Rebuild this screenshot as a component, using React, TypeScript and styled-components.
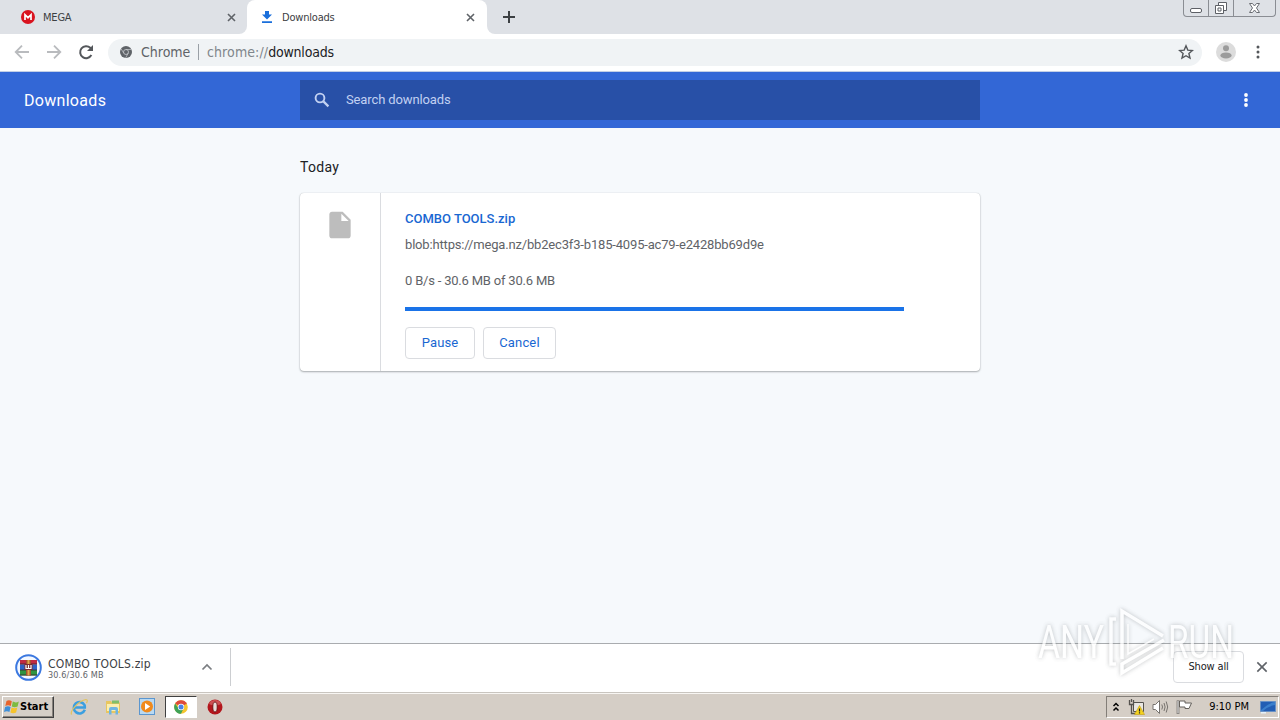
/**
 * Browser window with the downloads page, the download shelf and the taskbar
 */

import React from 'react';
import styled, { createGlobalStyle, css } from 'styled-components';

const GlobalStyle = createGlobalStyle`
  * {
    box-sizing: border-box;
  }

  body {
    margin: 0;
    overflow: hidden;
    font-family: Roboto, "Liberation Sans", sans-serif;
  }
`;

const tahoma = css`
  font-family: "DejaVu Sans Condensed", "DejaVu Sans", sans-serif;
  font-stretch: condensed;
`;

const Desktop = styled.div`
  position: relative;
  display: flex;
  flex-direction: column;
  width: 1280px;
  height: 720px;
  overflow: hidden;
  background: #f6f9fc;
`;

const Label = styled.span<{ $size: number; $spacing?: number; $color?: string; $weight?: number }>`
  font-size: ${({ $size }) => $size}px;
  letter-spacing: ${({ $spacing = 0 }) => $spacing}px;
  color: ${({ $color = 'inherit' }) => $color};
  font-weight: ${({ $weight = 400 }) => $weight};
  line-height: 16px;
  white-space: nowrap;
`;

/* Tab strip */

const TabStrip = styled.div`
  ${tahoma}
  display: flex;
  height: 34px;
  background: #fff;
  color: #3c4043;
`;

const Tab = styled.div<{ $active?: boolean }>`
  display: flex;
  align-items: center;
  width: ${({ $active }) => ($active ? 240 : 247)}px;
  height: 34px;
  padding: 0 ${({ $active }) => ($active ? '12px 0 13px' : '11px 0 21px')};
  background: ${({ $active }) => ($active ? '#fff' : '#dee1e6')};
  border-radius: ${({ $active }) => ($active ? '8px 8px 0 0' : '0 0 8px 0')};

  > span {
    flex: 1;
    margin: 1px 0 0 8px;
  }
`;

const TabSlot = styled.div`
  background: linear-gradient(#dee1e6 50%, #fff 50%);
`;

const StripRest = styled.div`
  display: flex;
  flex: 1;
  align-items: flex-start;
  justify-content: space-between;
  padding: 0 4px 0 15px;
  background: #dee1e6;
  border-bottom-left-radius: 8px;

  > svg:first-child {
    margin-top: 10px;
  }
`;

const WindowButtons = styled.div`
  display: flex;
  height: 17px;
  border: 1px solid #8a8d93;
  border-top: 0;
  border-radius: 0 0 4px 4px;
`;

const WindowButton = styled.div<{ $width: number }>`
  display: flex;
  align-items: center;
  justify-content: center;
  width: ${({ $width }) => $width}px;

  & + & {
    border-left: 1px solid #8a8d93;
  }
`;

/* Toolbar */

const Toolbar = styled.div`
  ${tahoma}
  display: flex;
  align-items: center;
  height: 38px;
  padding: 0 20px 1px 13px;
  background: #fff;
  border-bottom: 1px solid #c3cfe6;
`;

const NavButtons = styled.div`
  display: flex;
  gap: 14px;
  width: 95px;
`;

const Omnibox = styled.div`
  display: flex;
  flex: 1;
  align-items: center;
  height: 27px;
  padding: 0 8px 0 12px;
  background: #f0f3f5;
  border-radius: 14px;
`;

const Divider = styled.i`
  width: 1px;
  height: 16px;
  margin: 0 8px;
  background: #9aa0a6;
`;

const SiteName = styled.div`
  display: flex;
  width: 49px;
  margin-left: 9px;
`;

const Address = styled.div`
  display: flex;
  flex: 1;
`;

const ToolbarRight = styled.div`
  display: flex;
  align-items: center;
  gap: 20px;
  margin-left: 14px;
`;

/* Downloads page */

const PageHeader = styled.header`
  display: grid;
  grid-template-columns: 276px 680px 1fr;
  align-items: center;
  height: 56px;
  padding: 0 24px;
  background: #3367d6;
  color: #fff;

  > span {
    margin-top: 2px;
  }

  > svg {
    justify-self: end;
  }
`;

const SearchField = styled.div`
  display: flex;
  align-items: center;
  gap: 16px;
  height: 40px;
  padding-left: 14px;
  background: #2850a7;
  color: #c2d1f2;
`;

const Page = styled.main`
  display: flex;
  flex: 1;
  flex-direction: column;
  width: 680px;
  margin: 0 auto;
  padding-top: 31px;
`;

const Card = styled.section`
  display: flex;
  height: 178px;
  margin-top: 18px;
  background: #fff;
  border-radius: 4px;
  box-shadow: 0 1px 2px rgba(60, 64, 67, 0.4), 0 0 1px rgba(60, 64, 67, 0.3);
`;

const FileIconCell = styled.div`
  display: flex;
  justify-content: center;
  width: 81px;
  padding-top: 16px;
  border-right: 1px solid #dadce0;
`;

const CardBody = styled.div`
  display: flex;
  flex-direction: column;
  align-items: flex-start;
  padding: 18px 24px 0;
`;

const Url = styled(Label)`
  margin-top: 10px;
`;

const Status = styled(Label)`
  margin-top: 20px;
`;

const Progress = styled.div`
  width: 499px;
  height: 4px;
  margin: 18px 0 16px;
  background: #1a73e8;
`;

const Actions = styled.div`
  display: flex;
  gap: 8px;
`;

const Button = styled.button<{ $width: number }>`
  display: flex;
  align-items: center;
  justify-content: center;
  width: ${({ $width }) => $width}px;
  height: 32px;
  padding: 0;
  background: #fff;
  border: 1px solid #dadce0;
  border-radius: 4px;
  color: #1967d2;
  font-family: inherit;
`;

/* Download shelf */

const Shelf = styled.footer`
  ${tahoma}
  display: flex;
  align-items: center;
  height: 49px;
  padding: 0 12px 2px 15px;
  background: #fff;
  border-top: 1px solid #a9acaf;
  color: #3c4043;
`;

const ShelfItem = styled.div`
  display: flex;
  align-items: center;
  width: 216px;
  height: 38px;
  padding-right: 17px;
  border-right: 1px solid #ccced1;
`;

const ShelfText = styled.div`
  display: flex;
  flex: 1;
  flex-direction: column;
  margin: 6px 0 0 6px;

  > span {
    line-height: 11px;
  }
`;

const ShowAll = styled(Button)`
  ${tahoma}
  margin: 0 12px 0 auto;
  color: #202124;
`;

/* Taskbar */

const Taskbar = styled.div`
  ${tahoma}
  display: flex;
  align-items: center;
  height: 28px;
  padding: 2px 1px 2px 2px;
  background: #d5cec6;
  border-top: 1px solid #c9c5bf;
  box-shadow: inset 0 1px #f8f6f3;
`;

const StartButton = styled.div`
  display: flex;
  align-items: center;
  width: 52px;
  height: 22px;
  padding-left: 1px;
  border: 1px solid;
  border-color: #fff #404040 #404040 #fff;
  box-shadow: inset -1px -1px #87827c;
`;

const QuickLaunch = styled.div`
  display: flex;
  align-items: center;
  gap: 2px;
  margin-left: 9px;
`;

const LaunchItem = styled.div<{ $pressed?: boolean }>`
  display: flex;
  align-items: center;
  justify-content: center;
  width: 32px;
  height: 22px;
  background: ${({ $pressed }) => ($pressed ? '#fff' : 'none')};
  border: ${({ $pressed }) => ($pressed ? '1px solid #fff' : '1px solid transparent')};
  border-top-color: ${({ $pressed }) => ($pressed ? '#404040' : 'transparent')};
  border-left-color: ${({ $pressed }) => ($pressed ? '#404040' : 'transparent')};
`;

const Tray = styled.div`
  display: flex;
  align-items: center;
  width: 173px;
  height: 22px;
  margin-left: auto;
  padding: 0 2px 0 5px;
  border: 1px solid;
  border-color: #837e78 #fff #fff #837e78;

  > span {
    margin: 0 11px 0 auto;
  }
`;

const TrayIcons = styled.div`
  display: flex;
  align-items: center;
  gap: 7px;
`;

const Watermark = styled.svg`
  position: absolute;
  left: 1030px;
  top: 604px;
  filter: drop-shadow(0 0 2px rgba(90, 95, 100, 0.5));
  opacity: 0.75;
  pointer-events: none;
`;

const CloseIcon = ({ size = 9, weight = 1.6 }: { size?: number; weight?: number }) => (
  <svg width={size} height={size} viewBox="0 0 9 9">
    <path d="M1 1l7 7M8 1L1 8" stroke="#5f6368" strokeWidth={weight} />
  </svg>
);

const DotsIcon = ({ color }: { color: string }) => (
  <svg width="4" height="14" viewBox="0 0 4 14" fill={color}>
    <circle cx="2" cy="2" r="1.5" />
    <circle cx="2" cy="7" r="1.5" />
    <circle cx="2" cy="12" r="1.5" />
  </svg>
);

const MegaIcon = () => (
  <svg width="14" height="14" viewBox="0 0 14 14">
    <circle cx="7" cy="7" r="7" fill="#d9131f" />
    <path d="M4 10V4.700l3 3 3-3V10" fill="none" stroke="#fff" strokeWidth="1.700" />
  </svg>
);

const DownloadIcon = () => (
  <svg width="14" height="14" viewBox="0 0 14 14" fill="#1a6fdb">
    <path d="M5 1h4v3.500h3L7 9.500 2 4.500h3zM2 11.300h10V13H2z" />
  </svg>
);

const ArrowIcon = ({ flip }: { flip?: boolean }) => (
  <svg width="18" height="18" viewBox="0 0 18 18">
    <path
      d="M16 9H3M9 2.700L2.700 9 9 15.300"
      fill="none"
      stroke="#b9bbbe"
      strokeWidth="1.800"
      transform={flip ? 'matrix(-1 0 0 1 18 0)' : undefined}
    />
  </svg>
);

const ReloadIcon = () => (
  <svg width="18" height="18" viewBox="0 0 18 18">
    <path d="M14.400 12.100A6 6 0 1 1 13.300 4.800L15 6.500" fill="none" stroke="#54575b" strokeWidth="2" />
    <path d="M16 2v6h-6z" fill="#54575b" />
  </svg>
);

const SiteIcon = () => (
  <svg width="12" height="12" viewBox="0 0 12 12">
    <circle cx="6" cy="6" r="6" fill="#5f6368" />
    <circle cx="6" cy="6" r="2.500" fill="#5f6368" stroke="#c9ccd0" strokeWidth="0.800" />
    <path d="M6 3.500h5.300M3.800 7.200L1.200 3M8.200 7.200l-2.500 4.600" stroke="#c9ccd0" strokeWidth="0.700" />
  </svg>
);

const StarIcon = () => (
  <svg width="16" height="16" viewBox="0 0 16 16">
    <path
      d="M8 1.800l1.800 4.300 4.600.4-3.500 3 1.100 4.600L8 11.700l-4 2.400 1.100-4.600-3.500-3 4.600-.4z"
      fill="none"
      stroke="#54575b"
      strokeWidth="1.400"
    />
  </svg>
);

const AvatarIcon = () => (
  <svg width="20" height="20" viewBox="0 0 20 20">
    <circle cx="10" cy="10" r="10" fill="#dcdcdc" />
    <circle cx="10" cy="6.200" r="3" fill="#9b9b9b" />
    <ellipse cx="10" cy="13.400" rx="5.600" ry="3" fill="#9b9b9b" />
  </svg>
);

const SearchIcon = () => (
  <svg width="16" height="16" viewBox="0 0 16 16" fill="none" stroke="#c2d1f2">
    <circle cx="6" cy="6" r="4.400" strokeWidth="1.900" />
    <path d="M9.400 9.400l5 5" strokeWidth="2.200" />
  </svg>
);

const FileIcon = () => (
  <svg width="32" height="32" viewBox="0 0 24 24">
    <path
      d="M6 2c-1.100 0-1.990.9-1.990 2L4 20c0 1.100.89 2 1.990 2H18c1.100 0 2-.9 2-2V8l-6-6H6zm7 7V3.500L18.500 9H13z"
      fill="#bdbdbd"
    />
  </svg>
);

const ArchiveIcon = () => (
  <svg width="27" height="27" viewBox="0 0 27 27">
    <circle cx="13.500" cy="13.500" r="12.300" fill="#f4f8ff" stroke="#3b78e0" strokeWidth="2" />
    <path d="M5 6h17v4.500H5z" fill="#c02a44" />
    <path d="M5 10.500h17V16H5z" fill="#2f62c8" />
    <path d="M5 16h17v5.500H5z" fill="#2f9440" />
    <path d="M5 10h17M5 16h17M5 21h17" stroke="#3a2230" strokeWidth="0.800" />
    <path d="M11 6h5v15.500h-5z" fill="#a5502e" />
    <path d="M12.500 6h2v15.500h-2z" fill="#e0a94a" />
    <path d="M9.500 10h8v6h-8z" fill="#7c2a30" />
    <path d="M11 11v3.500h5V11M13.500 11v3.500" fill="none" stroke="#fff" strokeWidth="1.200" />
  </svg>
);

const ChevronIcon = () => (
  <svg width="12" height="8" viewBox="0 0 12 8">
    <path d="M1.500 6.500L6 2l4.500 4.500" fill="none" stroke="#7a7d81" strokeWidth="1.700" />
  </svg>
);

const WindowsIcon = () => (
  <svg width="16" height="16" viewBox="0 0 16 16">
    <path d="M2.500 2Q5 .5 7.800 2.200L6.800 7Q4 5.500 1.300 7z" fill="#e8642c" />
    <path d="M8.800 2.600q3 1.600 6-.1L13.600 7.500q-3 1.500-5.800 0z" fill="#7dbb42" />
    <path d="M1.100 8Q4 6.600 6.600 8l-1.200 5Q3 11.500 0 13z" fill="#3f8fd8" />
    <path d="M7.600 8.500q3 1.500 5.700 0l-1.200 5q-3 1.500-5.700 0z" fill="#f6c32c" />
  </svg>
);

const ExplorerIcon = () => (
  <svg width="18" height="18" viewBox="0 0 18 18" fill="none">
    <path d="M14.800 11.800A5.700 5.700 0 1 1 14.500 7q.4 1.200.3 2.500H5" stroke="#3b9fe0" strokeWidth="2.600" />
    <path d="M1.600 16.500C-.5 13 9 2.500 16 1.500c1.800 0 1.500 2 .4 3.600" stroke="#e2c35d" strokeWidth="1.200" />
  </svg>
);

const FolderIcon = () => (
  <svg width="18" height="18" viewBox="0 0 18 18">
    <path d="M2 3h5l1 1.500h8V15H2z" fill="#e8c65f" />
    <path d="M3 6h12v7H3z" fill="#fbeeb0" />
    <path d="M8 2.500h7v3H8z" fill="#7fbf6b" />
    <path d="M5 16.500V11q0-2 2-2h5q2 0 2 2v5.500h-2.500V12h-4v4.500z" fill="#6fb5e2" />
  </svg>
);

const PlayerIcon = () => (
  <svg width="17" height="17" viewBox="0 0 17 17">
    <rect x="0.500" y="0.500" width="15" height="16" fill="#b9d9f2" stroke="#5b96cf" />
    <circle cx="8" cy="8.500" r="6" fill="#f08a1c" />
    <path d="M6 5l5.200 3.500L6 12z" fill="#fff" />
  </svg>
);

const ChromeIcon = () => (
  <svg width="14" height="14" viewBox="0 0 14 14">
    <circle cx="7" cy="7" r="6.800" fill="#f5c52f" />
    <path d="M7 7L1.100 3.600A6.800 6.800 0 0 1 12.900 3.600z" fill="#de4a3c" />
    <path d="M7 7H3.500L1.100 3.600A6.800 6.800 0 0 0 7 13.800L9.500 8.500z" fill="#3fa257" />
    <circle cx="7" cy="7" r="3.200" fill="#fff" />
    <circle cx="7" cy="7" r="2.500" fill="#4a82e6" />
  </svg>
);

const OperaIcon = () => (
  <svg width="16" height="16" viewBox="0 0 16 16">
    <circle cx="8" cy="8" r="7.500" fill="#b3161c" />
    <path d="M2 5a6.500 6.500 0 0 1 12 0q-6 3-12 0z" fill="#d9696b" opacity="0.700" />
    <ellipse cx="8" cy="8" rx="2.200" ry="5" fill="#e9dcd8" stroke="#5e0a0d" strokeWidth="0.800" />
  </svg>
);

const NetworkIcon = () => (
  <svg width="17" height="16" viewBox="0 0 17 16">
    <path d="M5.500 3.500h10v9h-10z" fill="#e9e7e2" stroke="#55524e" />
    <path d="M1.500 1v4.500h4V1M3.500 0v3M3.500 5v9.500h4" fill="none" stroke="#55524e" strokeWidth="1.300" />
    <path d="M11.500 6.500l5 9h-10z" fill="#f4d21f" stroke="#c29c10" strokeWidth="0.600" />
    <path d="M11.500 9.500v3M11.500 13.300v1.200" stroke="#222" strokeWidth="1.200" />
  </svg>
);

const VolumeIcon = () => (
  <svg width="17" height="16" viewBox="0 0 17 16" fill="none" stroke="#77736e">
    <path d="M1 5.500h2.500l4-4v13l-4-4H1z" fill="#fff" />
    <path d="M9.800 5.500q1.400 2.500 0 5M12 4q2.200 4 0 8M14.200 2.500q3 5.500 0 11" />
  </svg>
);

const FlagIcon = () => (
  <svg width="17" height="16" viewBox="0 0 17 16" fill="none" stroke="#65615c">
    <path d="M2 1.500v13.500" strokeWidth="2.600" />
    <path d="M2 2v12.500" stroke="#fff" strokeWidth="1" />
    <path d="M3.500 2h5.500v2h6.500l-2.500 5.500H9V8H3.500z" fill="#fff" />
  </svg>
);

const ShowDesktopIcon = () => (
  <svg width="16" height="14" viewBox="0 0 16 14">
    <path d="M0.500 1.500h15v10h-15z" fill="#235eb4" stroke="#6991c5" />
    <path d="M1 10Q8 3 15 2v3Q8 6 3 11H1z" fill="#3c80cc" />
    <path d="M1 12h5v1.500H1z" fill="#e6f1f8" />
  </svg>
);

const RunWatermark = () => (
  <Watermark width="214" height="80" viewBox="0 0 214 80">
    <g fill="#fff" fontFamily="Roboto, sans-serif" fontSize="46">
      <text x="8" y="54" textLength="66" lengthAdjust="spacingAndGlyphs">ANY</text>
      <text x="138" y="54" textLength="66" lengthAdjust="spacingAndGlyphs">RUN</text>
    </g>
    <g fill="none" stroke="#fff" strokeWidth="3.500">
      <path d="M86 15h-5v45h5" />
      <path d="M92 55V7l41 25" />
      <path d="M134 36L92 60v9l41-25" />
      <path d="M98 20v30l26-15" strokeWidth="1.500" />
    </g>
  </Watermark>
);

const App: React.FC = () => {
  return (
    <Desktop>
      <GlobalStyle />
      <TabStrip>
        <Tab>
          <MegaIcon />
          <Label $size={11} $spacing={-0.2}>MEGA</Label>
          <CloseIcon />
        </Tab>
        <TabSlot>
          <Tab $active>
            <DownloadIcon />
            <Label $size={11} $spacing={-0.2}>Downloads</Label>
            <CloseIcon />
          </Tab>
        </TabSlot>
        <StripRest>
          <svg width="13" height="13" viewBox="0 0 13 13">
            <path d="M7 1v12M1 7h12" stroke="#3c4043" strokeWidth="2" />
          </svg>
          <WindowButtons>
            <WindowButton $width={24}>
              <svg width="13" height="13" viewBox="0 0 13 13">
                <rect x="0.500" y="6.500" width="11" height="4" rx="1.500" fill="#fff" stroke="#5d6066" />
              </svg>
            </WindowButton>
            <WindowButton $width={25}>
              <svg width="13" height="13" viewBox="0 0 13 13" fill="#fff" stroke="#5d6066">
                <path d="M3.500 .5h8v8h-8z" />
                <path d="M.5 3.500h8v8h-8zM3 6h3v3H3z" />
              </svg>
            </WindowButton>
            <WindowButton $width={42}>
              <svg width="13" height="12" viewBox="0 0 13 12">
                <path
                  d="M1.500 1.500h3l2 2.500 2-2.500h3L8.500 6l3 4.500h-3l-2-2.500-2 2.500h-3L4.500 6z"
                  fill="#fff"
                  stroke="#6a6d73"
                />
              </svg>
            </WindowButton>
          </WindowButtons>
        </StripRest>
      </TabStrip>

      <Toolbar>
        <NavButtons>
          <ArrowIcon />
          <ArrowIcon flip />
          <ReloadIcon />
        </NavButtons>
        <Omnibox>
          <SiteIcon />
          <SiteName>
            <Label $size={14} $color="#5f6368">Chrome</Label>
          </SiteName>
          <Divider />
          <Address>
            <Label $size={14} $spacing={0.1} $color="#80868b">chrome://</Label>
            <Label $size={14} $spacing={-0.2} $color="#202124">downloads</Label>
          </Address>
          <StarIcon />
        </Omnibox>
        <ToolbarRight>
          <AvatarIcon />
          <DotsIcon color="#54575b" />
        </ToolbarRight>
      </Toolbar>

      <PageHeader>
        <Label $size={16} $spacing={0.3}>Downloads</Label>
        <SearchField>
          <SearchIcon />
          <Label $size={13} $spacing={-0.12}>Search downloads</Label>
        </SearchField>
        <svg width="20" height="14" viewBox="0 0 20 14" fill="#fff">
          <circle cx="10" cy="2" r="1.900" />
          <circle cx="10" cy="7" r="1.900" />
          <circle cx="10" cy="12" r="1.900" />
        </svg>
      </PageHeader>

      <Page>
        <Label $size={14} $spacing={0.3} $color="#202124">Today</Label>
        <Card>
          <FileIconCell>
            <FileIcon />
          </FileIconCell>
          <CardBody>
            <Label $size={13} $weight={500} $color="#1967d2">COMBO TOOLS.zip</Label>
            <Url $size={13} $spacing={-0.17} $color="#5f6368">
              blob:https://mega.nz/bb2ec3f3-b185-4095-ac79-e2428bb69d9e
            </Url>
            <Status $size={13} $spacing={-0.2} $color="#5f6368">0 B/s - 30.6 MB of 30.6 MB</Status>
            <Progress />
            <Actions>
              <Button $width={70}>
                <Label $size={13} $spacing={0.15}>Pause</Label>
              </Button>
              <Button $width={73}>
                <Label $size={13} $spacing={0.15}>Cancel</Label>
              </Button>
            </Actions>
          </CardBody>
        </Card>
      </Page>

      <Shelf>
        <ShelfItem>
          <ArchiveIcon />
          <ShelfText>
            <Label $size={12} $spacing={0.2}>COMBO TOOLS.zip</Label>
            <Label $size={9} $spacing={0.15} $color="#5f6368">30.6/30.6 MB</Label>
          </ShelfText>
          <ChevronIcon />
        </ShelfItem>
        <ShowAll $width={71}>
          <Label $size={11} $spacing={-0.15}>Show all</Label>
        </ShowAll>
        <CloseIcon size={12} weight={1.2} />
      </Shelf>

      <Taskbar>
        <StartButton>
          <WindowsIcon />
          <Label $size={11} $weight={700} $color="#000">Start</Label>
        </StartButton>
        <QuickLaunch>
          <LaunchItem>
            <ExplorerIcon />
          </LaunchItem>
          <LaunchItem>
            <FolderIcon />
          </LaunchItem>
          <LaunchItem>
            <PlayerIcon />
          </LaunchItem>
          <LaunchItem $pressed>
            <ChromeIcon />
          </LaunchItem>
          <LaunchItem>
            <OperaIcon />
          </LaunchItem>
        </QuickLaunch>
        <Tray>
          <TrayIcons>
            <svg width="9" height="10" viewBox="0 0 9 10">
              <path d="M1.500 4l2.500-2.500L6.500 4M1.500 8.500L4 6l2.500 2.500" fill="none" stroke="#000" strokeWidth="1.500" />
            </svg>
            <NetworkIcon />
            <VolumeIcon />
            <FlagIcon />
          </TrayIcons>
          <Label $size={11} $color="#000">9:10 PM</Label>
          <ShowDesktopIcon />
        </Tray>
      </Taskbar>

      <RunWatermark />
    </Desktop>
  );
};

export default App;
